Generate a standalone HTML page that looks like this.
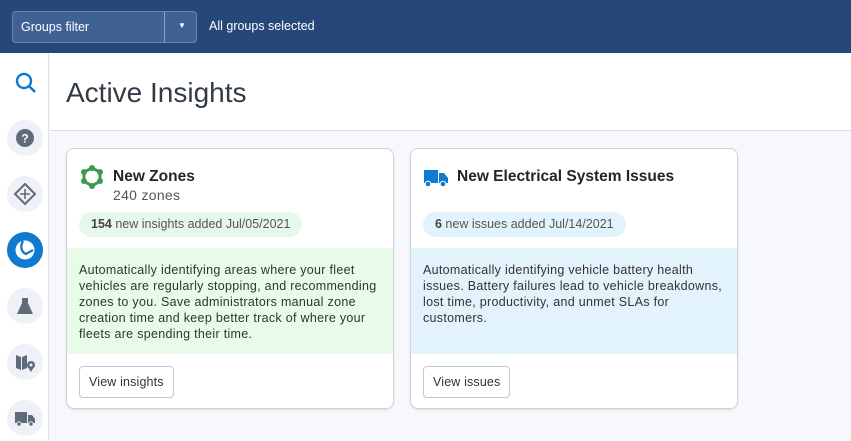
<!DOCTYPE html>
<html><head><style>
*{box-sizing:border-box;margin:0;padding:0}
body{width:851px;height:440px;overflow:hidden;font-family:"Liberation Sans",sans-serif;background:#f7f8fb;position:relative;color:#202124}
.top{position:absolute;left:0;top:0;width:851px;height:53px;background:#25477a}
.sel{position:absolute;left:12px;top:11px;width:185px;height:32px;border:1px solid #6c87b3;border-radius:4px;background:#3f6194;color:#fff;font-size:12.5px}
.sel span{position:absolute;left:8px;top:8px}
.sel .dv{position:absolute;left:151px;top:0;width:1px;height:30px;background:#8ca3c8}
.sel .ar{position:absolute;left:165px;top:9px;font-size:8px}
.allg{position:absolute;left:209px;top:19px;color:#fff;font-size:12.5px}
.side{position:absolute;left:0;top:53px;width:49px;height:387px;background:#fff;border-right:1px solid #dde1e8}
.ic{position:absolute;left:7px;width:36px;height:36px;border-radius:50%;background:#eef1f6}
.main{position:absolute;left:50px;top:53px;width:801px;height:78px;background:#fff;border-bottom:1px solid #d6dae2}
h1{position:absolute;left:66px;top:77px;font-weight:normal;font-size:28px;color:#333b47}
.card{position:absolute;top:148px;width:328px;height:261px;background:#fff;border:1px solid #cfd3da;border-radius:8px;overflow:hidden;box-shadow:0 1px 2px rgba(0,0,0,.1)}
.t{position:absolute;left:46px;top:19px;font-size:15.5px;font-weight:bold;color:#252525}
.sub{position:absolute;left:46px;top:38px;font-size:14px;color:#555;letter-spacing:.3px}
.pill{position:absolute;left:12px;top:63px;height:25px;border-radius:13px;font-size:12.5px;color:#555;padding:5px 12px}
.pill b{color:#444}
.desc{position:absolute;left:0;top:99px;width:100%;height:106px;font-size:12.5px;letter-spacing:.3px;line-height:16px;color:#333;padding:14px 12px}
.btn{position:absolute;left:12px;top:217px;height:32px;border:1px solid #c3c7cf;border-radius:4px;font-size:12.5px;padding:8px 9px;color:#333;background:#fff;letter-spacing:.15px}
</style></head><body>
<div class="top"><div class="sel"><span>Groups filter</span><div class="dv"></div><div class="ar">▼</div></div><div class="allg">All groups selected</div></div>
<div class="side">
<svg style="position:absolute;left:14px;top:18px" width="24" height="24" viewBox="0 0 24 24"><circle cx="10" cy="10" r="7" fill="none" stroke="#0f7ad0" stroke-width="2.4"/><path d="M15 15l6 6" stroke="#0f7ad0" stroke-width="2.6"/></svg>
<div class="ic" style="top:67px"><svg width="36" height="36"><circle cx="18" cy="18" r="9" fill="#5f6b7a"/><text x="18" y="22.5" fill="#fff" font-size="12" font-weight="bold" text-anchor="middle" font-family="Liberation Sans">?</text></svg></div>
<div class="ic" style="top:123px"><svg width="36" height="36"><path d="M18 8l10 10-10 10L8 18z" fill="none" stroke="#5f6b7a" stroke-width="2"/><path d="M18 13v10M13 18h10" stroke="#5f6b7a" stroke-width="1.6"/></svg></div>
<div class="ic" style="top:179px;background:#0f7ad0"><svg width="36" height="36"><circle cx="18" cy="18" r="9.5" fill="#fff"/><path d="M16 9c-3 5-2 11 3 13l7-4" fill="none" stroke="#0f7ad0" stroke-width="2.3"/></svg></div>
<div class="ic" style="top:235px"><svg width="36" height="36"><path d="M15 10h6v5l5 11H10l5-11z" fill="#5f6b7a"/></svg></div>
<div class="ic" style="top:291px"><svg width="36" height="36"><path d="M9 11l5 2v13l-5-2zM15 13l5-2v13l-5 2z" fill="#5f6b7a"/><circle cx="24" cy="21" r="4" fill="#5f6b7a"/><path d="M21 23l3 5 3-5" fill="#5f6b7a"/><circle cx="24" cy="21" r="1.5" fill="#eef1f6"/></svg></div>
<div class="ic" style="top:347px"><svg width="36" height="36"><path d="M8 12h12v11H8zM21 15h4l3 4v4h-7z" fill="#5f6b7a"/><circle cx="12" cy="24" r="2.2" fill="#5f6b7a" stroke="#eef1f6"/><circle cx="24" cy="24" r="2.2" fill="#5f6b7a" stroke="#eef1f6"/></svg></div>
</div>
<div class="main"></div>
<h1>Active Insights</h1>
<div class="card" style="left:66px">
<svg style="position:absolute;left:12px;top:15px" width="26" height="26" viewBox="0 0 26 26"><polygon points="13,4 21,8 21,17 13,22 5,17 5,8" fill="none" stroke="#3c9a4e" stroke-width="3"/><g fill="#3c9a4e"><circle cx="13" cy="4" r="3"/><circle cx="21" cy="8" r="3"/><circle cx="21" cy="17" r="3"/><circle cx="13" cy="22" r="3"/><circle cx="5" cy="17" r="3"/><circle cx="5" cy="8" r="3"/></g></svg>
<div class="t">New Zones</div><div class="sub">240 zones</div>
<div class="pill" style="background:#e5f8e9"><b>154</b> new insights added Jul/05/2021</div>
<div class="desc" style="background:#e8fae8">Automatically identifying areas where your fleet vehicles are regularly stopping, and recommending zones to you. Save administrators manual zone creation time and keep better track of where your fleets are spending their time.</div>
<div class="btn">View insights</div>
</div>
<div class="card" style="left:410px">
<svg style="position:absolute;left:12px;top:18px" width="26" height="22" viewBox="0 0 26 22"><path d="M1 3h14v13H1zM16 6h5l4 5v5h-9z" fill="#0f7ad0"/><circle cx="5" cy="17" r="2.8" fill="#0f7ad0" stroke="#fff"/><circle cx="20" cy="17" r="2.8" fill="#0f7ad0" stroke="#fff"/></svg>
<div class="t">New Electrical System Issues</div>
<div class="pill" style="background:#e3f3fc"><b>6</b> new issues added Jul/14/2021</div>
<div class="desc" style="background:#e3f3fc">Automatically identifying vehicle battery health issues. Battery failures lead to vehicle breakdowns, lost time, productivity, and unmet SLAs for customers.</div>
<div class="btn">View issues</div>
</div>
</body></html>
